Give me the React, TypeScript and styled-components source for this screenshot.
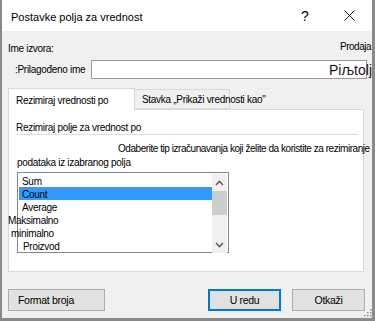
import React from 'react';
import styled, { createGlobalStyle } from 'styled-components';

const GlobalStyle = createGlobalStyle`
  html, body {
    margin: 0;
    padding: 0;
    background: #ffffff;
  }
  * {
    box-sizing: border-box;
  }
`;

const FONT = `'Liberation Sans', Arial, sans-serif`;

const Dialog = styled.div`
  width: 375px;
  height: 321px;
  display: flex;
  flex-direction: column;
  overflow: hidden;
  border-left: 2px solid #8a8a8a;
  border-right: 3px solid #8a8a8a;
  border-bottom: 3px solid #8a8a8a;
  font-family: ${FONT};
  font-size: 10px;
  letter-spacing: -0.3px;
  color: #000;
  background: #f0f0f0;
`;

const TitleBar = styled.div`
  height: 31px;
  flex: 0 0 31px;
  display: flex;
  align-items: center;
  background: #fff;
  padding: 0 12px 0 9px;
`;

const Title = styled.div`
  flex: 1;
  font-size: 11px;
  letter-spacing: 0;
  padding-top: 2px;
`;

const TitleButton = styled.div<{ $width: number }>`
  width: ${(p) => p.$width}px;
  height: 31px;
  display: flex;
  align-items: center;
  justify-content: center;
  font-size: 14px;
  letter-spacing: 0;
  & + & {
    margin-left: 21px;
  }
`;

const Body = styled.div`
  flex: 1;
  display: flex;
  flex-direction: column;
  padding: 10px 5px 0 6px;
`;

const SourceRow = styled.div`
  height: 14px;
  display: flex;
  align-items: center;
  white-space: nowrap;
`;

const SourceValue = styled.span`
  margin-left: auto;
  margin-right: -4px;
  margin-top: -4px;
  letter-spacing: -0.5px;
`;

const NameRow = styled.div`
  margin-top: 5px;
  height: 19px;
  display: flex;
  align-items: center;
`;

const NameLabel = styled.span`
  flex: 0 0 83px;
  padding-left: 7px;
  white-space: nowrap;
`;

const NameInput = styled.div`
  flex: 1;
  height: 19px;
  display: flex;
  align-items: center;
  justify-content: flex-end;
  background: #fff;
  border: 1px solid #9a9a9a;
  white-space: nowrap;
`;

const NameValue = styled.span`
  font-size: 14px;
  letter-spacing: 0;
  color: #1c1010;
  margin-right: -6px;
  margin-top: 1px;
`;

const TabStrip = styled.div`
  margin-top: 9px;
  height: 21px;
  display: flex;
  align-items: flex-end;
  position: relative;
  z-index: 1;
`;

const Tab = styled.div<{ $active?: boolean; $width: number }>`
  width: ${(p) => p.$width}px;
  height: ${(p) => (p.$active ? 22 : 20)}px;
  margin-bottom: ${(p) => (p.$active ? -1 : 0)}px;
  margin-left: ${(p) => (p.$active ? 0 : -1)}px;
  display: flex;
  align-items: center;
  padding-left: 7px;
  padding-top: ${(p) => (p.$active ? 2 : 1)}px;
  background: ${(p) => (p.$active ? '#fff' : '#f0f0f0')};
  border: 1px solid #d9d9d9;
  border-bottom: ${(p) => (p.$active ? 'none' : '1px solid #d9d9d9')};
  white-space: nowrap;
`;

const Panel = styled.div`
  height: 163px;
  margin-right: 3px;
  background: #fff;
  border: 1px solid #d9d9d9;
  padding-left: 7px;
  display: flex;
  flex-direction: column;
`;

const Heading = styled.div`
  margin-top: 10px;
  height: 14px;
  display: flex;
  align-items: center;
  white-space: nowrap;
`;

const Separator = styled.div`
  height: 1px;
  margin-right: 5px;
  background: #dcdcdc;
`;

const Line = styled.div<{ $indent: number; $tight?: boolean }>`
  height: 14px;
  display: flex;
  align-items: center;
  padding-left: ${(p) => p.$indent}px;
  letter-spacing: ${(p) => (p.$tight ? -0.45 : -0.3)}px;
  white-space: nowrap;
`;

const Description = styled.div`
  margin-top: 6px;
`;

const ListBox = styled.div`
  margin-top: 3px;
  margin-left: 1px;
  width: 212px;
  height: 81px;
  border: 1px solid #828790;
  display: flex;
  padding: 1px 1px 0 1px;
`;

const Items = styled.div`
  flex: 1;
  display: flex;
  flex-direction: column;
`;

const Item = styled.div<{ $selected?: boolean; $shift: number }>`
  height: 13px;
  display: flex;
  align-items: center;
  padding-left: 3px;
  background: ${(p) => (p.$selected ? '#3399ff' : 'transparent')};
  white-space: nowrap;
  span {
    margin-left: ${(p) => p.$shift}px;
    padding-top: 1px;
  }
`;

const ScrollBar = styled.div`
  flex: 0 0 15px;
  height: 79px;
  background: #f0f0f0;
  display: flex;
  flex-direction: column;
  align-items: center;
`;

const Arrow = styled.div`
  height: 17px;
  display: flex;
  align-items: center;
  justify-content: center;
`;

const Thumb = styled.div`
  width: 15px;
  height: 24px;
  background: #cdcdcd;
`;

const Footer = styled.div`
  flex: 1;
  display: flex;
  align-items: flex-start;
  padding-top: 17px;
  position: relative;
`;

const Button = styled.div<{ $default?: boolean; $width: number; $align?: string }>`
  width: ${(p) => p.$width}px;
  height: 22px;
  display: flex;
  align-items: center;
  justify-content: ${(p) => p.$align || 'center'};
  padding-left: ${(p) => (p.$align ? 9 : 0)}px;
  background: #e1e1e1;
  border: ${(p) => (p.$default ? '2px solid #0078d7' : '1px solid #adadad')};
  white-space: nowrap;
  font-size: 10.5px;
`;

const Spacer = styled.div`
  flex: 1;
`;

const ButtonGroup = styled.div`
  display: flex;
  gap: 11px;
  margin-right: 2px;
`;

const Grip = styled.svg`
  position: absolute;
  right: -5px;
  bottom: 1px;
`;

const Chevron = ({ up }: { up?: boolean }) => (
  <svg width="9" height="6" viewBox="0 0 9 6">
    <polyline
      points={up ? '1,5 4.5,1.5 8,5' : '1,1 4.5,4.5 8,1'}
      fill="none"
      stroke="#606060"
      strokeWidth="1.6"
    />
  </svg>
);

const items = [
  { label: 'Sum', shift: 0 },
  { label: 'Count', shift: 0, selected: true },
  { label: 'Average', shift: 0 },
  { label: 'Maksimalno', shift: -14 },
  { label: 'minimalno', shift: -11 },
  { label: 'Proizvod', shift: 1 },
];

const App = () => (
  <>
    <GlobalStyle />
    <Dialog>
      <TitleBar>
        <Title>Postavke polja za vrednost</Title>
        <TitleButton $width={24}>?</TitleButton>
        <TitleButton $width={22}>
          <svg width="11" height="11" viewBox="0 0 11 11">
            <path d="M0.5 0.5 L10.5 10.5 M10.5 0.5 L0.5 10.5" stroke="#111" strokeWidth="1" />
          </svg>
        </TitleButton>
      </TitleBar>
      <Body>
        <SourceRow>
          <span>Ime izvora:</span>
          <SourceValue>Prodaja</SourceValue>
        </SourceRow>
        <NameRow>
          <NameLabel>:Prilagođeno ime</NameLabel>
          <NameInput>
            <NameValue>Piљtolj</NameValue>
          </NameInput>
        </NameRow>
        <TabStrip>
          <Tab $active $width={127}>Rezimiraj vrednosti po</Tab>
          <Tab $width={96}>Stavka „Prikaži vrednosti kao"</Tab>
        </TabStrip>
        <Panel>
          <Heading>Rezimiraj polje za vrednost po</Heading>
          <Separator />
          <Description>
            <Line $indent={102} $tight>
              Odaberite tip izračunavanja koji želite da koristite za rezimiranje
            </Line>
            <Line $indent={1}>podataka iz izabranog polja</Line>
          </Description>
          <ListBox>
            <Items>
              {items.map((it) => (
                <Item key={it.label} $selected={it.selected} $shift={it.shift}>
                  <span>{it.label}</span>
                </Item>
              ))}
            </Items>
            <ScrollBar>
              <Arrow>
                <Chevron up />
              </Arrow>
              <Thumb />
              <Spacer />
              <Arrow>
                <Chevron />
              </Arrow>
            </ScrollBar>
          </ListBox>
        </Panel>
        <Footer>
          <Button $width={97} $align="flex-start">Format broja</Button>
          <Spacer />
          <ButtonGroup>
            <Button $default $width={73}>U redu</Button>
            <Button $width={73}>Otkaži</Button>
          </ButtonGroup>
          <Grip width="8" height="8" viewBox="0 0 8 8">
            <g fill="#8c8c8c">
              <rect x="6" y="0" width="1.5" height="1.5" />
              <rect x="3" y="3" width="1.5" height="1.5" />
              <rect x="6" y="3" width="1.5" height="1.5" />
              <rect x="0" y="6" width="1.5" height="1.5" />
              <rect x="3" y="6" width="1.5" height="1.5" />
              <rect x="6" y="6" width="1.5" height="1.5" />
            </g>
          </Grip>
        </Footer>
      </Body>
    </Dialog>
  </>
);

export default App;
